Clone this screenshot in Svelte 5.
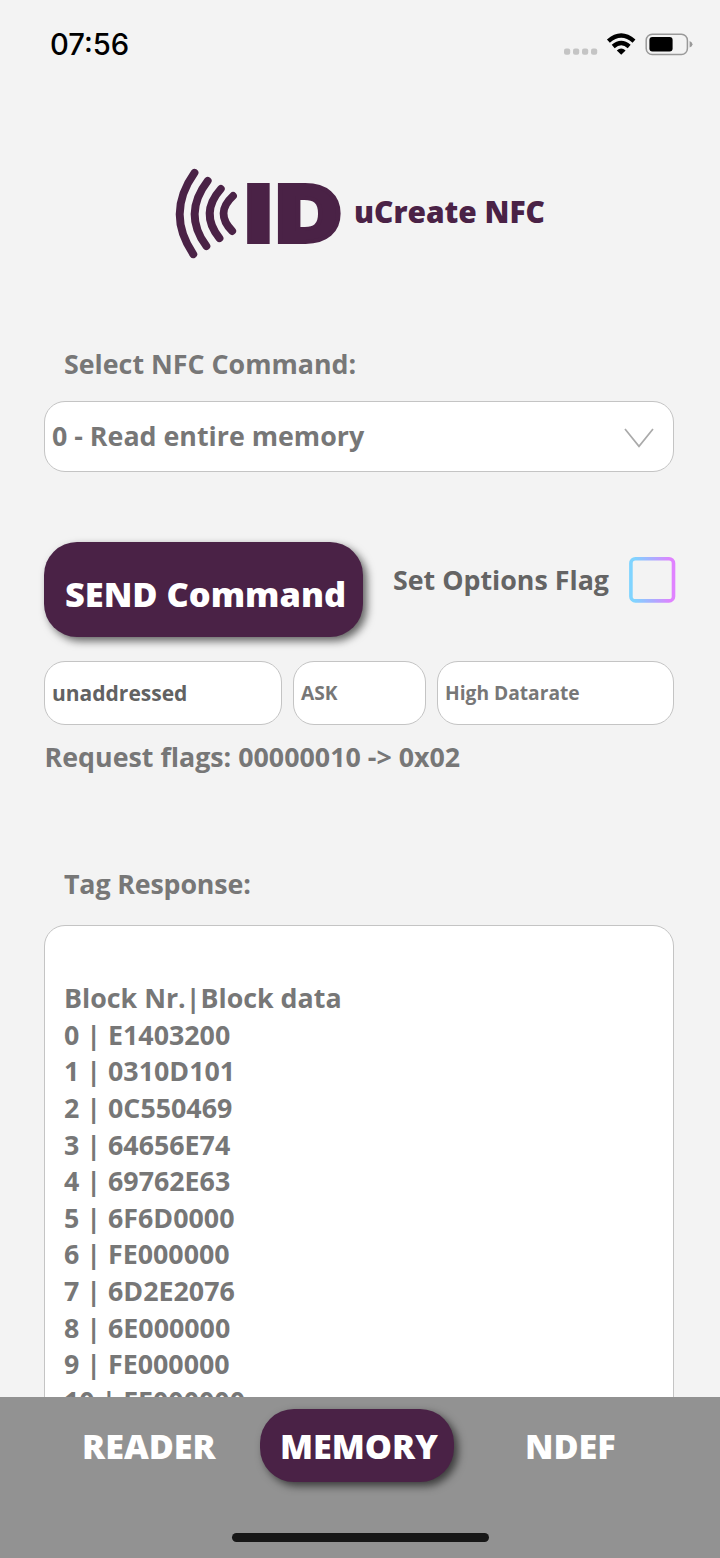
<script>
  const blocks = [
    'E1403200', '0310D101', '0C550469', '64656E74', '69762E63', '6F6D0000',
    'FE000000', '6D2E2076', '6E000000', 'FE000000', 'FE000000'
  ];
</script>

<div class="screen">
  <header class="status">
    <span class="time">07:56</span>
    <svg class="indicators" width="132" height="30" viewBox="562 30 132 30">
      <g fill="#c4c4c4">
        <rect x="564" y="48.5" width="6.2" height="6.2" rx="2" />
        <rect x="573" y="48.5" width="6.2" height="6.2" rx="2" />
        <rect x="582" y="48.5" width="6.2" height="6.2" rx="2" />
        <rect x="591" y="48.5" width="6.2" height="6.2" rx="2" />
      </g>
      <g fill="none" stroke="#000" stroke-width="4.4">
        <path d="M608.4 41.1Q621.2 29.9 634 41.1" />
        <path d="M613.2 46.5Q621.2 39.4 629.2 46.5" />
      </g>
      <path d="M616.8 50.5Q621.2 46.5 625.6 50.5L621.2 54.8Z" />
      <rect x="646.2" y="34.2" width="41.2" height="20.3" rx="6" fill="none" stroke="#999" stroke-width="1.5" />
      <rect x="649.4" y="37" width="23.2" height="14.6" rx="3" />
      <path d="M689.6 41Q692.5 42.2 692.5 44.3T689.6 47.6Z" fill="#999" />
    </svg>
  </header>

  <div class="brand">
    <svg width="172" height="96" viewBox="172 165 172 96">
      <g fill="none" stroke="#4a2246" stroke-width="7.8" stroke-linecap="round">
        <path d="M194.5 172.8Q165.5 213.5 193.3 254.2" />
        <path d="M207.7 180.8Q182.3 213.8 206.4 246.2" />
        <path d="M220.8 189Q199.2 213.2 219.5 238.2" />
        <path d="M233 196Q214.5 213 232.2 231" />
      </g>
      <g class="mark">
        <text transform="translate(245.2 241.6) scale(1.16 1)">I</text>
        <text transform="translate(276 241.6) scale(1.16 1)">D</text>
      </g>
    </svg>
    <span class="name">uCreate NFC</span>
  </div>

  <main>
    <div class="label">Select NFC Command:</div>
    <div class="box select">
      <span>0 - Read entire memory</span>
      <svg width="32" height="22" viewBox="0 0 32 22"><path d="M2 2L16 19.3L30 2" fill="none" stroke="#aaa" stroke-width="1.7" /></svg>
    </div>

    <div class="actions">
      <button class="send">SEND Command</button>
      <span class="flag">Set Options Flag</span>
      <svg class="check" width="48" height="48" viewBox="0 0 48 48">
        <defs>
          <linearGradient id="edge"><stop offset="0.08" stop-color="#80d4ff" /><stop offset="0.5" stop-color="#a9adff" /><stop offset="0.94" stop-color="#e082ff" /></linearGradient>
        </defs>
        <rect x="2.9" y="2.7" width="42.6" height="42.2" rx="4.5" fill="none" stroke="url(#edge)" stroke-width="3.6" />
      </svg>
    </div>

    <div class="fields">
      <div class="box mode">unaddressed</div>
      <div class="box">ASK</div>
      <div class="box">High Datarate</div>
    </div>
    <div class="request">Request flags: 00000010 -&gt; 0x02</div>

    <div class="label second">Tag Response:</div>
    <div class="box response">
      <div>Block Nr.|Block data</div>
      {#each blocks as data, i}
        <div>{i} | {data}</div>
      {/each}
    </div>
  </main>

  <nav>
    <div class="tabs">
      <span class="reader">READER</span>
      <span class="active">MEMORY</span>
      <span class="ndef">NDEF</span>
    </div>
    <div class="home"></div>
  </nav>
</div>

<style>
  :global(body) { background: #f3f3f3; }
  * { box-sizing: border-box; }
  .screen {
    width: 720px; height: 1558px; overflow: hidden;
    display: flex; flex-direction: column;
    background: #f3f3f3; color: #777;
    font: 700 26.8px/36.6px "Open Sans", sans-serif;
    white-space: nowrap;
  }
  .status {
    height: 90px; flex: none; padding: 0 26px 0 50px;
    display: flex; justify-content: space-between; align-items: flex-start;
  }
  .time { margin-top: 27px; color: #000; font: 500 29.2px/36px Inter, sans-serif; }
  .indicators { margin-top: 30px; }
  .brand { display: flex; height: 96px; margin: 75px 0 0 172px; flex: none; }
  .mark { font: 900 78px Inter, sans-serif; fill: #4a2246; stroke: #4a2246; stroke-width: 4px; }
  .name { margin: 27px 0 0 10px; color: #4a2246; font-size: 29.9px; line-height: 40px; font-weight: 800; }
  main { flex: 1; min-height: 0; overflow: hidden; padding: 85px 46px 0 44px; display: flex; flex-direction: column; }
  .label { height: 36px; margin-left: 20px; flex: none; }
  .box { background: #fff; border: 1px solid #c4c4c4; border-radius: 21px; }
  .select {
    height: 71px; margin-top: 19px; padding: 0 18px 0 7px; flex: none;
    display: flex; align-items: center; justify-content: space-between;
  }
  .select svg { margin-top: 2px; }
  .actions { display: flex; height: 95px; margin-top: 70px; flex: none; }
  .send {
    width: 319px; height: 95px; padding: 9px 0 0 4px; border: 0; border-radius: 33px; flex: none;
    background: #4a2246; color: #fff; font: 800 34.4px/46px "Open Sans", sans-serif;
    box-shadow: 4px 4px 8px rgba(0, 0, 0, .6);
  }
  .flag { margin: 20px 0 0 30px; width: 217px; flex: none; color: #646464; }
  .check { margin: 14px 0 0 18px; flex: none; }
  .fields {
    display: grid; grid-template-columns: 238px 133px 237px; gap: 11px;
    height: 64px; margin-top: 24px; flex: none; font-size: 19.2px;
  }
  .fields .box { padding: 0 7px; display: flex; align-items: center; }
  .fields .mode { color: #626262; font-size: 21px; }
  .request { margin: 14px 0 0 .6px; height: 36px; flex: none; }
  .second { margin-top: 91px; letter-spacing: -.15px; }
  .response { height: 560px; margin-top: 23px; padding: 54px 19px; flex: none; line-height: 36.62px; }
  nav { height: 161.5px; flex: none; background: #929292; color: #fff; font: 800 34.2px/46px "Open Sans", sans-serif; }
  .tabs { height: 86px; padding-top: 12px; display: flex; align-items: flex-start; }
  .reader { margin: 14px 0 0 82px; width: 178px; }
  .active {
    width: 194px; height: 73px; padding: 14px 0 0 20px; border-radius: 34px;
    background: #4a2246; box-shadow: 4px 4px 8px rgba(0, 0, 0, .6);
  }
  .ndef { margin: 14px 0 0 71px; }
  .home { width: 257px; height: 9px; margin: 50.5px 0 0 232px; border-radius: 5px; background: #171717; }
</style>
